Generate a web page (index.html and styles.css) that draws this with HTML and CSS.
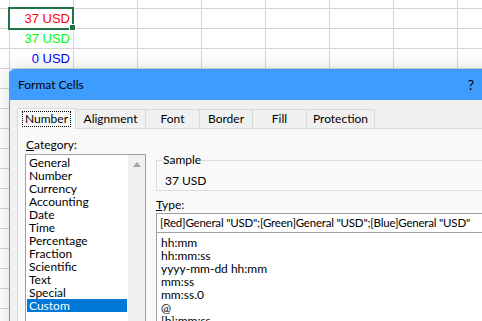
FILE: index.html
```html
<!DOCTYPE html>
<html lang="en">
<head>
    <meta charset="UTF-8">
    <title>Format Cells</title>
    <link rel="stylesheet" href="styles.css">
</head>
<body>

    <div class="sheet">
        <div class="cell red">37 USD</div>
        <div class="cell green">37 USD</div>
        <div class="cell blue">0 USD</div>
        <div class="selection"><span class="fill-handle"></span></div>
    </div>

    <div class="dialog">
        <div class="title-bar">
            <span class="title">Format Cells</span>
            <span class="help">?</span>
        </div>
        <div class="dialog-body">
            <div class="tabs">
                <div class="tab active tab-number"><span class="focus">Number</span></div>
                <div class="tab tab-alignment">Alignment</div>
                <div class="tab tab-font">Font</div>
                <div class="tab tab-border">Border</div>
                <div class="tab tab-fill">Fill</div>
                <div class="tab tab-protection">Protection</div>
            </div>
            <div class="panel">
                <div class="category">
                    <div class="label"><u>C</u>ategory:</div>
                    <div class="listbox">
                        <ul class="items">
                            <li>General</li>
                            <li>Number</li>
                            <li>Currency</li>
                            <li>Accounting</li>
                            <li>Date</li>
                            <li>Time</li>
                            <li>Percentage</li>
                            <li>Fraction</li>
                            <li>Scientific</li>
                            <li>Text</li>
                            <li>Special</li>
                            <li class="selected">Custom</li>
                        </ul>
                        <div class="scrollbar"><span class="arrow-up"></span></div>
                    </div>
                </div>
                <div class="details">
                    <fieldset class="sample">
                        <legend>Sample</legend>
                        <div class="sample-value">37 USD</div>
                    </fieldset>
                    <div class="label type-label"><u>T</u>ype:</div>
                    <div class="type-input">[Red]General "USD";[Green]General "USD";[Blue]General "USD"</div>
                    <ul class="type-list">
                        <li>hh:mm</li>
                        <li>hh:mm:ss</li>
                        <li>yyyy-mm-dd hh:mm</li>
                        <li>mm:ss</li>
                        <li>mm:ss.0</li>
                        <li>@</li>
                        <li>[h]:mm:ss</li>
                    </ul>
                </div>
            </div>
        </div>
    </div>

</body>
</html>
```

FILE: styles.css
```css
body {
    margin: 0;
    padding: 0;
    width: 482px;
    height: 321px;
    overflow: hidden;
    position: relative;
    background-color: #ffffff;
    font-family: Lato, "Noto Sans", sans-serif;
    font-size: 12px;
    color: #000000;
}
.sheet {
    position: relative;
    height: 321px;
    padding: 8px 0 0 9px;
    box-sizing: border-box;
    background-image:
        linear-gradient(to bottom, #d4d4d4 1px, transparent 1px),
        linear-gradient(to right, #d4d4d4 1px, transparent 1px);
    background-size: 100% 20px, 64px 100%;
    background-position: 0 8px, 9px 0;
    font-family: "Liberation Sans", Arial, sans-serif;
    font-size: 13px;
}
.cell {
    width: 64px;
    height: 20px;
    line-height: 21px;
    text-align: right;
    padding-right: 3px;
    box-sizing: border-box;
}
.red { color: #ff0000; }
.green { color: #00ff00; }
.blue { color: #0000ff; }
.selection {
    position: absolute;
    left: 8px;
    top: 7px;
    width: 66px;
    height: 23px;
    border: 2px solid #217346;
    box-sizing: border-box;
}
.fill-handle {
    position: absolute;
    right: -4px;
    bottom: -3px;
    width: 5px;
    height: 5px;
    background-color: #217346;
    border: 1px solid #ffffff;
}
.dialog {
    position: absolute;
    left: 9px;
    top: 69px;
    width: 500px;
    height: 262px;
    border: 1px solid #3d9cfd;
    border-top: none;
    border-radius: 6px 6px 0 0;
    background-color: #f0f0f0;
    box-shadow: 0 0 20px rgba(0,0,0,0.15);
}
.title-bar {
    display: flex;
    justify-content: space-between;
    height: 31px;
    line-height: 31px;
    padding: 0 37px 0 8px;
    background-color: #3d9cfd;
    border-radius: 6px 6px 0 0;
    margin: 0 -1px;
}
.title {
    padding-left: 1px;
}
.help {
    font-size: 14px;
}
.dialog-body {
    padding: 8px 0 0 7px;
}
.tabs {
    display: flex;
    align-items: flex-end;
    height: 20px;
}
.tab {
    height: 19px;
    line-height: 18px;
    text-align: center;
    border-top: 1px solid #d9d9d9;
    border-left: 1px solid #d9d9d9;
    box-sizing: border-box;
    background-color: #f0f0f0;
}
.tab-number { width: 59px; }
.tab-alignment { width: 70px; }
.tab-font { width: 54px; }
.tab-border { width: 53px; }
.tab-fill { width: 54px; }
.tab-protection { width: 69px; border-right: 1px solid #d9d9d9; }
.tab.active {
    position: relative;
    z-index: 1;
    height: 21px;
    margin-bottom: -1px;
    line-height: 20px;
    background-color: #f9f9f9;
    border-right: 1px solid #d9d9d9;
    margin-right: -1px;
}
.focus {
    display: inline-block;
    line-height: 14px;
    padding: 0 2px;
    border: 1px dotted #000000;
}
.panel {
    display: flex;
    gap: 10px;
    height: 240px;
    padding: 9px 0 0 7px;
    border-top: 1px solid #d9d9d9;
    border-left: 1px solid #d9d9d9;
    background-color: #f9f9f9;
}
.label {
    line-height: 14px;
    padding-left: 1px;
}
.category {
    width: 121px;
}
.listbox {
    display: flex;
    margin-top: 2px;
    height: 200px;
    border: 1px solid #a0a0a0;
    background-color: #ffffff;
}
.items {
    width: 102px;
    margin: 0;
    padding: 1px;
    box-sizing: border-box;
    list-style: none;
}
.items li {
    line-height: 13px;
    height: 13px;
    padding-left: 2px;
}
.items li.selected {
    background-color: #0078d7;
    color: #ffffff;
}
.scrollbar {
    width: 17px;
    display: flex;
    justify-content: center;
    padding-top: 7px;
    background-color: #f0f0f0;
}
.arrow-up {
    width: 0;
    height: 0;
    border-left: 4.5px solid transparent;
    border-right: 4.5px solid transparent;
    border-bottom: 5px solid #a3a3a3;
}
.details {
    width: 340px;
}
.sample {
    margin: 15px 0 0 0;
    padding: 0 0 2px 5px;
    border: 1px solid #dcdcdc;
}
.sample legend {
    padding: 0 1px;
    line-height: 14px;
}
.sample-value {
    margin-top: 7px;
    padding-left: 3px;
    line-height: 14px;
}
.type-label {
    margin-top: 7px;
    padding-left: 0;
}
.type-input {
    margin-top: 1px;
    height: 20px;
    line-height: 18px;
    padding-left: 3px;
    border: 1px solid #a0a0a0;
    box-sizing: border-box;
    background-color: #ffffff;
    white-space: nowrap;
    font-size: 11.5px;
    letter-spacing: -0.2px;
}
.type-list {
    margin: 0;
    padding: 3px 0 0 0;
    height: 120px;
    list-style: none;
    border: 1px solid #a0a0a0;
    border-top: none;
    background-color: #ffffff;
}
.type-list li {
    line-height: 13px;
    height: 13px;
    padding-left: 4px;
}
```
